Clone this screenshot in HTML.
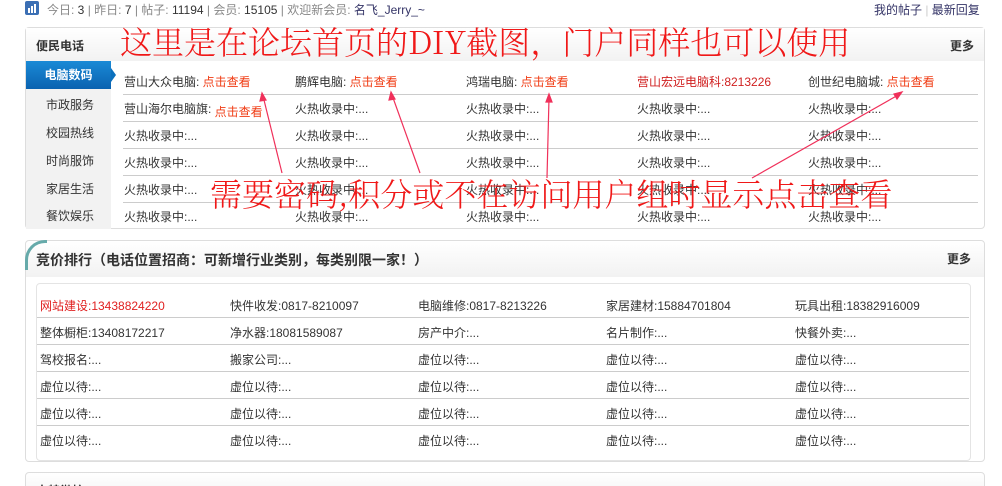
<!DOCTYPE html>
<html><head><meta charset="utf-8"><style>
*{margin:0;padding:0;box-sizing:border-box}
html,body{width:1002px;height:486px;overflow:hidden}
body{background:#fff;font-family:"Liberation Sans","Noto Sans CJK SC",sans-serif;font-size:12px;color:#333;position:relative}
.a{position:absolute;white-space:nowrap}
.g{color:#888}
.panel{position:absolute;border:1px solid #ddd;border-radius:4px;background:#fff}
.hd{position:absolute;left:0;right:0;top:0;background:linear-gradient(#fff,#f2f2f2)}
.line{position:absolute;height:1px;background:#ccc}
.red{color:#f03c14}
.big{position:absolute;color:#f01818;font-family:"Noto Serif CJK SC","Liberation Serif",serif;font-size:32px;font-weight:300;white-space:nowrap;line-height:1}
</style></head><body>
<div class="a" style="left:25px;top:1px;width:14px;height:14px;background:#3b6fb4;border-radius:2px"></div>
<div class="a" style="left:28px;top:8px;width:2px;height:5px;background:#fff"></div>
<div class="a" style="left:31px;top:6px;width:2px;height:7px;background:#fff"></div>
<div class="a" style="left:34px;top:4px;width:2px;height:9px;background:#fff"></div>
<div class="a g" style="left:47px;top:1px">今日: <span style="color:#333">3</span> | 昨日: <span style="color:#333">7</span> | 帖子: <span style="color:#333">11194</span> | 会员: <span style="color:#333">15105</span> | 欢迎新会员: <span style="color:#336">名飞_Jerry_~</span></div>
<div class="a" style="left:874px;top:1px;color:#336">我的帖子 <span style="color:#ccc">|</span> 最新回复</div>

<div class="panel" style="left:25px;top:27px;width:960px;height:202px">
 <div class="hd" style="height:33px"></div>
 <div class="a" style="left:10px;top:9px;font-weight:bold">便民电话</div>
 <div class="a" style="left:924px;top:9px;font-weight:bold">更多</div>
 <div class="a" style="left:0;top:33px;width:85px;height:168px;background:#f2f2f2"></div>
 <div class="a" style="left:0;top:33px;width:85px;height:28px;background:linear-gradient(#1a8ad6,#0a62b0);color:#fff;font-weight:bold;text-align:center;line-height:28px">电脑数码</div>
 <div class="a" style="left:85px;top:40px;width:0;height:0;border-left:5px solid #0a70bd;border-top:7px solid transparent;border-bottom:7px solid transparent"></div>
 <div class="a" style="left:20px;top:68px">市政服务</div>
 <div class="a" style="left:20px;top:96px">校园热线</div>
 <div class="a" style="left:20px;top:124px">时尚服饰</div>
 <div class="a" style="left:20px;top:152px">家居生活</div>
 <div class="a" style="left:20px;top:179px">餐饮娱乐</div>
</div>
<div class="line" style="left:123px;top:94px;width:855px"></div>
<div class="line" style="left:123px;top:121px;width:855px"></div>
<div class="line" style="left:123px;top:148px;width:855px"></div>
<div class="line" style="left:123px;top:175px;width:855px"></div>
<div class="line" style="left:123px;top:202px;width:855px"></div>
<div class="a" style="left:124px;top:73px">营山大众电脑: <span class="red">点击查看</span></div>
<div class="a" style="left:295px;top:73px">鹏辉电脑: <span class="red">点击查看</span></div>
<div class="a" style="left:466px;top:73px">鸿瑞电脑: <span class="red">点击查看</span></div>
<div class="a" style="left:637px;top:73px;color:#d02020">营山宏远电脑科:8213226</div>
<div class="a" style="left:808px;top:73px">创世纪电脑城: <span class="red">点击查看</span></div>
<div class="a" style="left:124px;top:100px">营山海尔电脑旗: <span class="red" style="position:relative;top:3px">点击查看</span></div>
<div class="a" style="left:295px;top:100px">火热收录中:...</div><div class="a" style="left:466px;top:100px">火热收录中:...</div><div class="a" style="left:637px;top:100px">火热收录中:...</div><div class="a" style="left:808px;top:100px">火热收录中:...</div>
<div class="a" style="left:124px;top:127px">火热收录中:...</div><div class="a" style="left:295px;top:127px">火热收录中:...</div><div class="a" style="left:466px;top:127px">火热收录中:...</div><div class="a" style="left:637px;top:127px">火热收录中:...</div><div class="a" style="left:808px;top:127px">火热收录中:...</div>
<div class="a" style="left:124px;top:154px">火热收录中:...</div><div class="a" style="left:295px;top:154px">火热收录中:...</div><div class="a" style="left:466px;top:154px">火热收录中:...</div><div class="a" style="left:637px;top:154px">火热收录中:...</div><div class="a" style="left:808px;top:154px">火热收录中:...</div>
<div class="a" style="left:124px;top:181px">火热收录中:...</div><div class="a" style="left:295px;top:181px">火热收录中:...</div><div class="a" style="left:466px;top:181px">火热收录中:...</div><div class="a" style="left:637px;top:181px">火热收录中:...</div><div class="a" style="left:808px;top:181px">火热收录中:...</div>
<div class="a" style="left:124px;top:208px">火热收录中:...</div><div class="a" style="left:295px;top:208px">火热收录中:...</div><div class="a" style="left:466px;top:208px">火热收录中:...</div><div class="a" style="left:637px;top:208px">火热收录中:...</div><div class="a" style="left:808px;top:208px">火热收录中:...</div>

<div class="big" style="left:120px;top:25px">这里是在论坛首页的DIY截图，门户同样也可以使用</div>
<div class="big" style="left:210px;top:177px">需要密码,积分或不在访问用户组时显示点击查看</div>
<svg class="a" style="left:0;top:0" width="1002" height="486">
 <g stroke="#f0305a" stroke-width="1.2" fill="#f0305a">
  <line x1="282" y1="173" x2="263" y2="96"/><polygon points="262,93 260,101 266,100"/>
  <line x1="420" y1="173" x2="392" y2="95"/><polygon points="391,92 389,100 395,99"/>
  <line x1="547" y1="178" x2="549" y2="98"/><polygon points="549,94 546,102 552,102"/>
  <line x1="752" y1="178" x2="900" y2="94"/><polygon points="902,92 894,94 897,99"/>
 </g>
</svg>

<div class="panel" style="left:25px;top:240px;width:960px;height:222px">
 <div class="hd" style="height:36px;border-radius:4px 4px 0 0"></div>
 <div class="a" style="left:-1px;top:-1px;width:22px;height:30px;border-left:3px solid #6aa;border-top:3px solid #6aa;border-radius:20px 0 0 0"></div>
 <div class="a" style="left:10px;top:9px;font-weight:bold;font-size:14px">竞价排行（电话位置招商：可新增行业类别，每类别限一家！）</div>
 <div class="a" style="left:921px;top:9px;font-weight:bold">更多</div>
 <div class="a" style="left:10px;top:42px;width:935px;height:178px;border:1px solid #e4e4e4;border-radius:4px"></div>
</div>
<div class="line" style="left:37px;top:317px;width:932px"></div>
<div class="line" style="left:37px;top:344px;width:932px"></div>
<div class="line" style="left:37px;top:371px;width:932px"></div>
<div class="line" style="left:37px;top:398px;width:932px"></div>
<div class="line" style="left:37px;top:425px;width:932px"></div>
<div class="a" style="left:40px;top:297px;color:#e02020">网站建设:13438824220</div><div class="a" style="left:230px;top:297px">快件收发:0817-8210097</div><div class="a" style="left:418px;top:297px">电脑维修:0817-8213226</div><div class="a" style="left:606px;top:297px">家居建材:15884701804</div><div class="a" style="left:795px;top:297px">玩具出租:18382916009</div>
<div class="a" style="left:40px;top:324px">整体橱柜:13408172217</div><div class="a" style="left:230px;top:324px">净水器:18081589087</div><div class="a" style="left:418px;top:324px">房产中介:...</div><div class="a" style="left:606px;top:324px">名片制作:...</div><div class="a" style="left:795px;top:324px">快餐外卖:...</div>
<div class="a" style="left:40px;top:351px">驾校报名:...</div><div class="a" style="left:230px;top:351px">搬家公司:...</div><div class="a" style="left:418px;top:351px">虚位以待:...</div><div class="a" style="left:606px;top:351px">虚位以待:...</div><div class="a" style="left:795px;top:351px">虚位以待:...</div>
<div class="a" style="left:40px;top:378px">虚位以待:...</div><div class="a" style="left:230px;top:378px">虚位以待:...</div><div class="a" style="left:418px;top:378px">虚位以待:...</div><div class="a" style="left:606px;top:378px">虚位以待:...</div><div class="a" style="left:795px;top:378px">虚位以待:...</div>
<div class="a" style="left:40px;top:405px">虚位以待:...</div><div class="a" style="left:230px;top:405px">虚位以待:...</div><div class="a" style="left:418px;top:405px">虚位以待:...</div><div class="a" style="left:606px;top:405px">虚位以待:...</div><div class="a" style="left:795px;top:405px">虚位以待:...</div>
<div class="a" style="left:40px;top:432px">虚位以待:...</div><div class="a" style="left:230px;top:432px">虚位以待:...</div><div class="a" style="left:418px;top:432px">虚位以待:...</div><div class="a" style="left:606px;top:432px">虚位以待:...</div><div class="a" style="left:795px;top:432px">虚位以待:...</div>

<div class="panel" style="left:25px;top:472px;width:960px;height:30px;background:linear-gradient(#fff,#f2f2f2)"></div>
<div class="a" style="left:36px;top:482px;font-weight:bold">土特微校</div>
</body></html>
